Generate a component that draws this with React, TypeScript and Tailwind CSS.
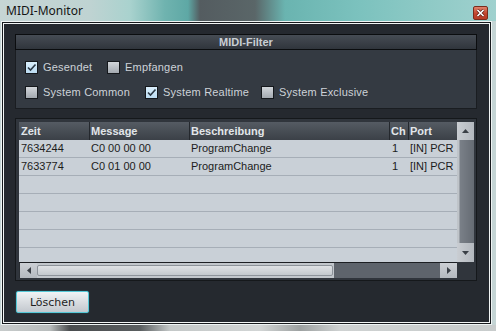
import React from "react";

function CheckBox({ checked }: { checked: boolean }) {
  return (
    <div
      className={
        "w-[13px] h-[13px] shrink-0 border border-[#15181c] flex items-center justify-center " +
        (checked
          ? "bg-[linear-gradient(#d9eefb,#bcdcf2)]"
          : "bg-[linear-gradient(#d2d6da,#a3a9b0)]")
      }
    >
      {checked && (
        <svg width="11" height="11" viewBox="0 0 11 11">
          <path d="M2 5.5 L4.5 8 L9.5 2.5" fill="none" stroke="#2b3946" strokeWidth="1.6" />
        </svg>
      )}
    </div>
  );
}

function Opt({ label, checked, w }: { label: string; checked: boolean; w: string }) {
  return (
    <div className={"flex items-center gap-[5px] " + w}>
      <CheckBox checked={checked} />
      <span className="text-[11px] leading-[13px] tracking-[0.2px] text-[#cdd2d8] font-['Liberation_Sans',sans-serif] whitespace-nowrap">
        {label}
      </span>
    </div>
  );
}

const rows = [
  ["7634244", "C0 00 00 00", "ProgramChange", "1", "[IN] PCR"],
  ["7633774", "C0 01 00 00", "ProgramChange", "1", "[IN] PCR"],
  ["", "", "", "", ""],
  ["", "", "", "", ""],
  ["", "", "", "", ""],
  ["", "", "", "", ""],
  ["", "", "", "", ""],
];

export default function App() {
  return (
    <div className="w-[496px] h-[331px] overflow-hidden flex flex-col bg-[#c4d4d4] font-['Liberation_Sans',sans-serif]">
      {/* title bar */}
      <div className="h-[21px] shrink-0 flex items-center pl-[6px] bg-[linear-gradient(90deg,#c6d5d5_0px,#bfd3d2_90px,#a9d2ce_130px,#6fb3af_165px,#5ea8a5_188px,#545c60_200px,#5a6668_255px,#6ab4b0_285px,#7cc2be_360px,#8fcac6_430px,#a0d1ce_496px)]">
        <span className="text-[12px] text-[#141414] font-['Noto_Sans',sans-serif] leading-none">MIDI-Monitor</span>
        <div className="ml-auto mr-[8px] mt-[4px] w-[15px] h-[14px] rounded-[2px] border border-[#7a2c1c] bg-[linear-gradient(#e0836b,#c2462e_55%,#b53c26)] flex items-center justify-center">
          <svg width="9" height="8" viewBox="0 0 9 8">
            <path d="M1.5 1 L7.5 7 M7.5 1 L1.5 7" stroke="#5a1a10" strokeWidth="3" />
            <path d="M1.5 1 L7.5 7 M7.5 1 L1.5 7" stroke="#ffffff" strokeWidth="1.7" />
          </svg>
        </div>
      </div>

      {/* window frame */}
      <div className="ml-[1px] w-[491px] h-[304px] shrink-0 border border-[#eef3f3] bg-[#16191c] p-[1px]">
        <div className="h-full border border-[#f2f5f5] bg-[#25292f] pt-[10px] pl-[11px] pr-[12px] flex flex-col">
          {/* MIDI-Filter */}
          <div className="w-[462px] flex flex-col">
            <div className="h-[16px] border border-[#0b0d0f] bg-[linear-gradient(#464c54,#30353c)] flex items-center justify-center">
              <span className="text-[11px] font-bold text-[#c9ced4] leading-none">MIDI-Filter</span>
            </div>
            <div className="h-[59px] border border-t-0 border-[#1a1d21] bg-[#343a42] pt-[11px] pl-[9px] flex flex-col gap-[12px]">
              <div className="flex items-center">
                <Opt label="Gesendet" checked={true} w="w-[82px]" />
                <Opt label="Empfangen" checked={false} w="w-[120px]" />
              </div>
              <div className="flex items-center">
                <Opt label="System Common" checked={false} w="w-[120px]" />
                <Opt label="System Realtime" checked={true} w="w-[116px]" />
                <Opt label="System Exclusive" checked={false} w="w-[140px]" />
              </div>
            </div>
          </div>

          {/* table panel */}
          <div className="mt-[9px] w-[462px] h-[163px] border border-[#15181b] bg-[#30353c] pt-[3px] pl-[3px] pr-[2px] pb-[2px]">
            <div className="flex flex-col w-[455px]">
              <div className="flex h-[140px]">
                {/* list */}
                <div className="w-[438px] flex flex-col overflow-hidden">
                  <div className="h-[18px] shrink-0 flex bg-[linear-gradient(#555b63,#3b4047)] text-[11px] font-bold text-[#e2e6ea] leading-[18px]">
                    <div className="w-[70px] pl-[2px] whitespace-nowrap">Zeit</div>
                    <div className="w-[100px] pl-[1px] border-l border-[#24282d] whitespace-nowrap">Message</div>
                    <div className="w-[200px] pl-[1px] border-l border-[#24282d] whitespace-nowrap">Beschreibung</div>
                    <div className="w-[19px] pl-[1px] border-l border-[#24282d] whitespace-nowrap">Ch</div>
                    <div className="w-[49px] pl-[1px] border-l border-[#24282d] whitespace-nowrap overflow-hidden">Port</div>
                  </div>
                  <div className="h-[122px] overflow-hidden bg-[#c9d0d7] flex flex-col">
                    {rows.map((r, i) => (
                      <div
                        key={i}
                        className="h-[18px] shrink-0 flex border-b border-[#a6aeb7] text-[11px] text-[#1c1c1c] leading-[17px]"
                      >
                        <div className="w-[70px] pl-[2px] whitespace-nowrap">{r[0]}</div>
                        <div className="w-[100px] pl-[2px] whitespace-nowrap">{r[1]}</div>
                        <div className="w-[200px] pl-[2px] whitespace-nowrap">{r[2]}</div>
                        <div className="w-[19px] pl-[3px] whitespace-nowrap">{r[3]}</div>
                        <div className="w-[49px] pl-[2px] whitespace-nowrap overflow-hidden">{r[4]}</div>
                      </div>
                    ))}
                  </div>
                </div>
                {/* vertical scrollbar */}
                <div className="w-[17px] flex flex-col">
                  <div className="h-[18px] bg-[linear-gradient(90deg,#c9cdd2,#b3b8be)] flex items-center justify-center">
                    <svg width="7" height="4" viewBox="0 0 7 4">
                      <path d="M3.5 0 L7 4 L0 4 Z" fill="#3a3f46" />
                    </svg>
                  </div>
                  <div className="flex-1 bg-[linear-gradient(90deg,#bfc4c9_0px,#bfc4c9_2px,#7a8088_3px,#656b73_17px)]"></div>
                  <div className="h-[19px] bg-[linear-gradient(90deg,#c9cdd2,#b3b8be)] flex items-center justify-center">
                    <svg width="7" height="4" viewBox="0 0 7 4">
                      <path d="M0 0 L7 0 L3.5 4 Z" fill="#3a3f46" />
                    </svg>
                  </div>
                </div>
              </div>
              {/* horizontal scrollbar */}
              <div className="flex h-[16px]">
                <div className="w-[438px] flex border-t border-[#1c1f23] bg-[#5e646c]">
                  <div className="w-[18px] bg-[linear-gradient(#ccd0d5,#b4b9bf)] border-l border-[#2a2e33] flex items-center justify-center">
                    <svg width="4" height="7" viewBox="0 0 4 7">
                      <path d="M4 0 L4 7 L0 3.5 Z" fill="#3a3f46" />
                    </svg>
                  </div>
                  <div className="w-[297px] bg-[#c2c7cc] py-[2px] pr-[1px]">
                    <div className="h-full rounded-[2px] border border-[#8d939a] bg-[linear-gradient(#dfe2e5,#c3c8cd)]"></div>
                  </div>
                  <div className="flex-1"></div>
                  <div className="w-[17px] bg-[linear-gradient(#ccd0d5,#b4b9bf)] flex items-center justify-center">
                    <svg width="4" height="7" viewBox="0 0 4 7">
                      <path d="M0 0 L4 3.5 L0 7 Z" fill="#3a3f46" />
                    </svg>
                  </div>
                </div>
                <div className="w-[17px] bg-[#30353c]"></div>
              </div>
            </div>
          </div>

          {/* button */}
          <div className="mt-[10px] ml-[1px]">
            <button className="w-[73px] h-[22px] rounded-[2px] border border-[#56c9d8] bg-[linear-gradient(#f0f3f5,#d9dde1_50%,#c3c8ce)] flex items-center justify-center shadow-[0_0_1px_#3aa8b8]">
              <span className="text-[11px] text-[#1e1e1e] font-['DejaVu_Sans',sans-serif] leading-none">Löschen</span>
            </button>
          </div>
        </div>
      </div>

      {/* bottom desktop strip */}
      <div className="flex-1 bg-[linear-gradient(90deg,#c7cbcb_0px,#b9bdbd_50px,#4a4d4f_70px,#5a5e60_140px,#c4c8c8_170px,#d2d5d5_260px,#9da1a1_300px,#cfd2d2_340px,#c8cccc_496px)]"></div>
    </div>
  );
}
